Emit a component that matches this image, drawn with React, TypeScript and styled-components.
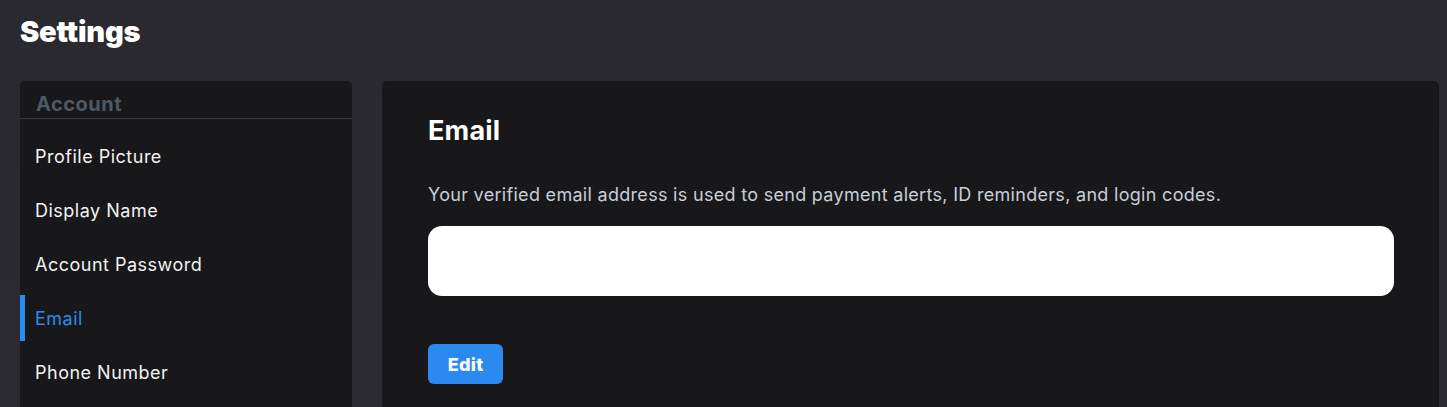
import React from 'react';
import styled, { createGlobalStyle } from 'styled-components';

const GlobalStyle = createGlobalStyle`
  html, body {
    margin: 0;
    padding: 0;
    background: #2a292f;
    font-family: Inter, "Noto Sans", "Liberation Sans", sans-serif;
    overflow: hidden;
  }
  * {
    box-sizing: border-box;
  }
`

const Page = styled.div`
  width: 1447px;
  height: 407px;
  padding: 13px 8px 0 20px;
  background: linear-gradient(180deg, #2a292f 0%, #2c2b31 100%);
`

const PageTitle = styled.h1`
  margin: 0;
  height: 68px;
  font-size: 29px;
  font-weight: 900;
  line-height: 38px;
  color: #ffffff;
  letter-spacing: -0.2px;
`

const Layout = styled.div`
  display: flex;
  gap: 30px;
  align-items: flex-start;
`

const Sidebar = styled.nav`
  width: 332px;
  flex-shrink: 0;
  height: 340px;
  background: #18181b;
  border-radius: 5px 5px 0 0;
`

const SectionHeader = styled.div`
  height: 38px;
  padding: 11px 16px 0;
  font-size: 20px;
  font-weight: 700;
  line-height: 24px;
  letter-spacing: 0.5px;
  color: #4e5964;
  border-bottom: 1px solid #3a3a42;
`

const NavList = styled.ul`
  list-style: none;
  margin: 0;
  padding: 14px 0 0;
`

const NavItem = styled.li<{ $active?: boolean }>`
  display: flex;
  align-items: center;
  height: 46px;
  margin-bottom: 8px;
  padding-left: ${p => (p.$active ? '10px' : '15px')};
  font-size: 18px;
  font-weight: 400;
  letter-spacing: 0.5px;
  color: ${p => (p.$active ? '#2b8bf0' : '#f2f2f2')};
  border-left: ${p => (p.$active ? '5px solid #2b8bf0' : 'none')};
`

const Content = styled.section`
  flex: 1;
  height: 340px;
  background: #18181b;
  border-radius: 5px 5px 0 0;
  padding: 33px 45px 0 46px;
`

const Heading = styled.h2`
  margin: 0;
  font-size: 27px;
  font-weight: 700;
  line-height: 34px;
  letter-spacing: 0.2px;
  color: #ffffff;
`

const Description = styled.p`
  margin: 35px 0 0;
  font-size: 18px;
  line-height: 24px;
  letter-spacing: 0.3px;
  color: #c9ced6;
`

const EmailInput = styled.input`
  display: block;
  width: 100%;
  height: 70px;
  margin-top: 19px;
  border: none;
  outline: none;
  border-radius: 14px;
  background: #ffffff;
  padding: 0 20px;
  font-size: 17px;
`

const EditButton = styled.button`
  display: block;
  margin-top: 48px;
  width: 75px;
  height: 40px;
  border: none;
  border-radius: 6px;
  background: #2a8af0;
  color: #ffffff;
  font-family: inherit;
  font-size: 18px;
  font-weight: 800;
  letter-spacing: 0.3px;
  cursor: pointer;
`

const navItems = ['Profile Picture', 'Display Name', 'Account Password', 'Email', 'Phone Number'];

export default function App() {
  return (
    <>
      <GlobalStyle />
      <Page>
        <PageTitle>Settings</PageTitle>
        <Layout>
          <Sidebar>
            <SectionHeader>Account</SectionHeader>
            <NavList>
              {navItems.map(item => (
                <NavItem key={item} $active={item === 'Email'}>
                  {item}
                </NavItem>
              ))}
            </NavList>
          </Sidebar>
          <Content>
            <Heading>Email</Heading>
            <Description>
              Your verified email address is used to send payment alerts, ID reminders, and login codes.
            </Description>
            <EmailInput type="email" aria-label="Email" />
            <EditButton>Edit</EditButton>
          </Content>
        </Layout>
      </Page>
    </>
  );
}
